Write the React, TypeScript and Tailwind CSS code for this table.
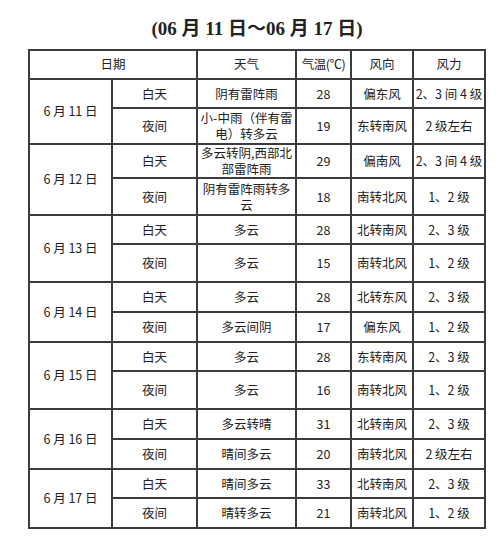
const rows = [
  { date: "6 月 11 日", h: [29, 36], d: ["白天", "阴有雷阵雨", "28", "偏东风", "2、3 间 4 级"], n: ["夜间", "小-中雨（伴有雷|电）转多云", "19", "东转南风", "2 级左右"] },
  { date: "6 月 12 日", h: [34, 37], d: ["白天", "多云转阴,西部北|部雷阵雨", "29", "偏南风", "2、3 间 4 级"], n: ["夜间", "阴有雷阵雨转多|云", "18", "南转北风", "1、2 级"] },
  { date: "6 月 13 日", h: [29, 38], d: ["白天", "多云", "28", "北转南风", "2、3 级"], n: ["夜间", "多云", "15", "南转北风", "1、2 级"] },
  { date: "6 月 14 日", h: [30, 30], d: ["白天", "多云", "28", "北转东风", "2、3 级"], n: ["夜间", "多云间阴", "17", "偏东风", "1、2 级"] },
  { date: "6 月 15 日", h: [29, 38], d: ["白天", "多云", "28", "东转南风", "2、3 级"], n: ["夜间", "多云", "16", "南转北风", "1、2 级"] },
  { date: "6 月 16 日", h: [30, 30], d: ["白天", "多云转晴", "31", "北转南风", "2、3 级"], n: ["夜间", "晴间多云", "20", "南转北风", "2 级左右"] },
  { date: "6 月 17 日", h: [29, 30], d: ["白天", "晴间多云", "33", "北转南风", "2、3 级"], n: ["夜间", "晴转多云", "21", "南转北风", "1、2 级"] },
];

const cell = "border-2 border-[#3c3c3c] text-center align-middle p-0";

function Lines({ text }: { text: string }) {
  const parts = text.split("|");
  return (
    <div className="leading-[16px]">
      {parts.map((p, i) => (
        <div key={i}>{p}</div>
      ))}
    </div>
  );
}

export default function App() {
  return (
    <div className="w-[500px] h-[541px] bg-white text-[#222]" style={{ fontFamily: '"Noto Sans CJK SC", sans-serif' }}>
      <div className="pt-[17px] h-[49px] text-center">
        <h1 className="pl-[14px] text-[19px] font-bold leading-[24px]" style={{ fontFamily: '"Liberation Serif", "Noto Sans CJK SC", serif' }}>
          (06 月 11 日～06 月 17 日)
        </h1>
      </div>
      <table className="ml-[28px] border-collapse table-fixed text-[12.5px]">
        <colgroup>
          <col className="w-[83px]" />
          <col className="w-[85px]" />
          <col className="w-[99px]" />
          <col className="w-[55px]" />
          <col className="w-[62px]" />
          <col className="w-[72px]" />
        </colgroup>
        <tbody>
          <tr className="h-[29px]">
            <td colSpan={2} className={cell}>日期</td>
            <td className={cell}>天气</td>
            <td className={`${cell} tracking-[-0.5px]`}>气温(℃)</td>
            <td className={cell}>风向</td>
            <td className={cell}>风力</td>
          </tr>
          {rows.map((r) => (
            <>
              <tr key={r.date + "d"} style={{ height: r.h[0] }}>
                <td rowSpan={2} className={cell}>{r.date}</td>
                {r.d.map((v, i) => (
                  <td key={i} className={`${cell} whitespace-nowrap`}>
                    <Lines text={v} />
                  </td>
                ))}
              </tr>
              <tr key={r.date + "n"} style={{ height: r.h[1] }}>
                {r.n.map((v, i) => (
                  <td key={i} className={`${cell} whitespace-nowrap`}>
                    <Lines text={v} />
                  </td>
                ))}
              </tr>
            </>
          ))}
        </tbody>
      </table>
    </div>
  );
}
